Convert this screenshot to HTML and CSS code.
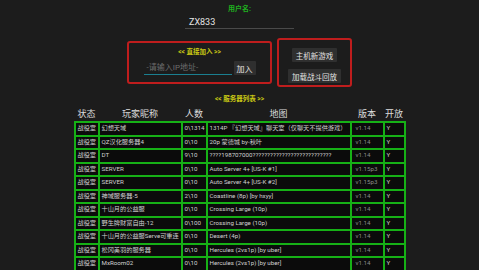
FILE: index.html
```html
<!DOCTYPE html>
<html>
<head>
    <meta charset='utf-8'>
    <title>联机大厅</title>
    <link rel="stylesheet" href="styles.css">
</head>
<body>
    <div class='page'>
        <div class='user-label'>用户名:</div>
        <div class='user-name'>ZX833</div>

        <div class='join-row'>
            <div class='box join-box'>
                <div class='box-title'>&lt;&lt; 直接加入 &gt;&gt;</div>
                <div class='ip-row'>
                    <div class='ip-input'>-请输入IP地址-</div>
                    <div class='button'>加入</div>
                </div>
            </div>
            <div class='box host-box'>
                <div class='button'>主机新游戏</div>
                <div class='button'>加载战斗回放</div>
            </div>
        </div>

        <div class='list-title'>&lt;&lt; 服务器列表 &gt;&gt;</div>

        <table class='servers'>
            <colgroup>
                <col class='c-state'>
                <col class='c-name'>
                <col class='c-count'>
                <col class='c-map'>
                <col class='c-ver'>
                <col class='c-open'>
            </colgroup>
            <thead>
                <tr>
                    <th>状态</th>
                    <th>玩家昵称</th>
                    <th>人数</th>
                    <th>地图</th>
                    <th>版本</th>
                    <th>开放</th>
                </tr>
            </thead>
            <tbody>
                <tr><td>战役室</td><td>幻想天域</td><td>0\1314</td><td>1314P 『幻想天域』聊天室（仅聊天不提供游戏）</td><td class='ver'>v1.14</td><td>Y</td></tr>
                <tr><td>战役室</td><td>QZ汉化服务器4</td><td>0\10</td><td>20p 蒙德城 by-秋叶</td><td class='ver'>v1.14</td><td>Y</td></tr>
                <tr><td>战役室</td><td>DT</td><td>9\10</td><td>????198707000???????????????????????????</td><td class='ver'>v1.14</td><td>Y</td></tr>
                <tr><td>战役室</td><td>SERVER</td><td>0\10</td><td>Auto Server 4+ [US-K #1]</td><td class='ver'>v1.15p3</td><td>Y</td></tr>
                <tr><td>战役室</td><td>SERVER</td><td>0\10</td><td>Auto Server 4+ [US-K #2]</td><td class='ver'>v1.15p3</td><td>Y</td></tr>
                <tr><td>战役室</td><td>神域服务器-5</td><td>2\10</td><td>Coastline (8p) [by hxyy]</td><td class='ver'>v1.14</td><td>Y</td></tr>
                <tr><td>战役室</td><td>十山月的公益服</td><td>0\10</td><td>Crossing Large (10p)</td><td class='ver'>v1.14</td><td>Y</td></tr>
                <tr><td>战役室</td><td>野生牌财富自由-12</td><td>0\100</td><td>Crossing Large (10p)</td><td class='ver'>v1.14</td><td>Y</td></tr>
                <tr><td>战役室</td><td>十山月的公益服Serve可重连</td><td>0\10</td><td>Desert (4p)</td><td class='ver'>v1.14</td><td>Y</td></tr>
                <tr><td>战役室</td><td>松冈美羽的服务器</td><td>0\10</td><td>Hercules (2vs1p) [by uber]</td><td class='ver'>v1.14</td><td>Y</td></tr>
                <tr><td>战役室</td><td>MxRoom02</td><td>0\10</td><td>Hercules (2vs1p) [by uber]</td><td class='ver'>v1.14</td><td>Y</td></tr>
            </tbody>
        </table>
    </div>
</body>
</html>
```

FILE: styles.css
```css
body {
    margin: 0;
    padding: 0;
    background-color: #1c1c1c;
    color: #dcdcdc;
    font-family: Roboto, "Noto Sans CJK SC", sans-serif;
    overflow: hidden;
}
.page {
    display: flex;
    flex-direction: column;
    align-items: center;
}
.user-label {
    margin-top: 4px;
    font-size: 7px;
    line-height: 10px;
    font-weight: bold;
    color: #1fb01f;
}
.user-name {
    width: 105px;
    margin-top: 2px;
    padding-left: 4px;
    font-size: 9px;
    line-height: 12px;
    color: #e6e6e6;
    border-bottom: 1px solid #4a4a4a;
}
.join-row {
    display: flex;
    align-items: center;
    gap: 5px;
    margin-top: 9px;
}
.box {
    border: 2px solid #bf1d1d;
    border-radius: 3px;
    box-sizing: border-box;
}
.join-box {
    width: 145px;
    height: 43px;
    padding-top: 4px;
    display: flex;
    flex-direction: column;
    align-items: center;
}
.box-title {
    font-size: 6.5px;
    line-height: 10px;
    font-weight: bold;
    color: #c8c814;
}
.ip-row {
    display: flex;
    align-items: center;
    gap: 2px;
    margin-top: 4px;
}
.ip-input {
    width: 88px;
    height: 14px;
    padding-left: 3px;
    font-size: 8px;
    line-height: 13px;
    color: #6c6c6c;
    border-bottom: 1.5px solid #1a7f90;
    box-sizing: border-box;
}
.button {
    height: 14px;
    padding: 0 4px;
    display: flex;
    align-items: center;
    justify-content: center;
    background-color: #2f2f2f;
    border-radius: 1px;
    font-size: 7.5px;
    color: #e2e2e2;
    white-space: nowrap;
    box-sizing: border-box;
}
.ip-row .button {
    padding: 0 3px;
    font-size: 8px;
}
.host-box {
    width: 75px;
    height: 49px;
    padding: 8px 0 2px;
    display: flex;
    flex-direction: column;
    align-items: center;
    gap: 7px;
}
.list-title {
    margin-top: 7px;
    font-size: 6.5px;
    line-height: 10px;
    font-weight: bold;
    color: #c8c814;
}
.servers {
    border-collapse: collapse;
    table-layout: fixed;
    width: 330px;
}
.c-state { width: 24px; }
.c-name { width: 83px; }
.c-count { width: 25px; }
.c-map { width: 144px; }
.c-ver { width: 33px; }
.c-open { width: 21px; }
.servers th {
    padding: 4px 0 1px;
    font-size: 9px;
    line-height: 12px;
    font-weight: normal;
    color: #dcdcdc;
    text-align: center;
}
.servers td {
    height: 11.5px;
    padding: 0 0 0 2px;
    border: 2px solid #16b016;
    background-color: #0b0b0b;
    font-size: 6.2px;
    line-height: 11.5px;
    color: #d0d0d0;
    white-space: nowrap;
    overflow: hidden;
    text-overflow: clip;
}
.servers td.ver {
    color: #8a8a8a;
    padding-left: 4px;
}
```
